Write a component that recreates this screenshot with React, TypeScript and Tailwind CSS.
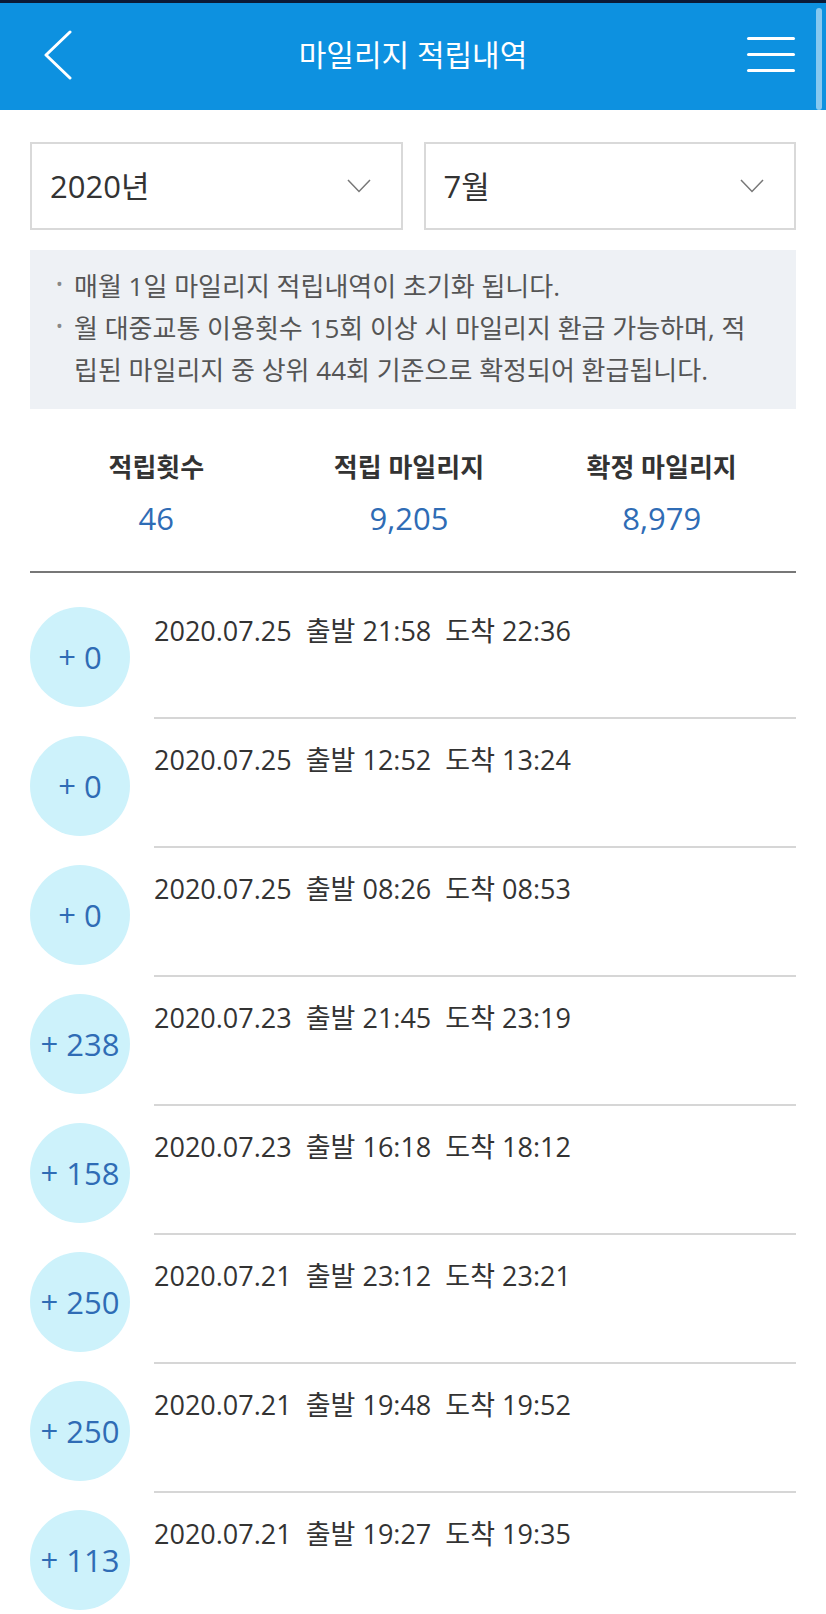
import React from "react";

type Trip = {
  points: number;
  date: string;
  depart: string;
  arrive: string;
};

const trips: Trip[] = [
  { points: 0, date: "2020.07.25", depart: "21:58", arrive: "22:36" },
  { points: 0, date: "2020.07.25", depart: "12:52", arrive: "13:24" },
  { points: 0, date: "2020.07.25", depart: "08:26", arrive: "08:53" },
  { points: 238, date: "2020.07.23", depart: "21:45", arrive: "23:19" },
  { points: 158, date: "2020.07.23", depart: "16:18", arrive: "18:12" },
  { points: 250, date: "2020.07.21", depart: "23:12", arrive: "23:21" },
  { points: 250, date: "2020.07.21", depart: "19:48", arrive: "19:52" },
  { points: 113, date: "2020.07.21", depart: "19:27", arrive: "19:35" },
];

const stats = [
  { label: "적립횟수", value: "46" },
  { label: "적립 마일리지", value: "9,205" },
  { label: "확정 마일리지", value: "8,979" },
];

function Chevron() {
  return (
    <svg width="24" height="14" viewBox="0 0 24 14" fill="none">
      <polyline points="1,1 12,12.5 23,1" stroke="#777" strokeWidth="1.5" />
    </svg>
  );
}

function Select({ label }: { label: string }) {
  return (
    <div className="flex h-[88px] items-center justify-between border-2 border-[#d9d9d9] bg-white pl-[18px] pr-[30px]">
      <span className="text-[31px] leading-none text-[#333]">{label}</span>
      <Chevron />
    </div>
  );
}

function TripRow({ trip }: { trip: Trip }) {
  return (
    <div className="flex pt-[17px]">
      <div className="flex h-[100px] w-[100px] shrink-0 items-center justify-center rounded-full bg-[#cdf2fb]">
        <span className="text-[31px] leading-none text-[#2f6cb5]">+ {trip.points}</span>
      </div>
      <div className="ml-[24px] h-[112px] flex-1 border-b-2 border-[#d6d6d6] pt-[6px]">
        <p className="whitespace-pre text-[27px] leading-[36px] text-[#333]">
          {trip.date}  출발 {trip.depart}  도착 {trip.arrive}
        </p>
      </div>
    </div>
  );
}

export default function App() {
  return (
    <div className="min-h-screen bg-white font-['Open_Sans','Noto_Sans_CJK_KR',sans-serif]">
      {/* Header */}
      <header className="relative grid h-[110px] grid-cols-[1fr_auto_1fr] items-center border-t-[3px] border-[#0b1a36] bg-[#0d91e0] pb-[4px]">
        <div className="flex justify-start pl-[44px]">
          <svg width="28" height="50" viewBox="0 0 28 50" fill="none">
            <polyline points="26,2 2,25 26,48" stroke="white" strokeWidth="3" strokeLinecap="round" strokeLinejoin="round" />
          </svg>
        </div>
        <h1 className="text-[30px] font-normal leading-none text-white">마일리지 적립내역</h1>
        <div className="flex justify-end pr-[31px]">
          <div className="flex flex-col gap-[13px]">
            <span className="block h-[3px] w-[48px] rounded-full bg-white" />
            <span className="block h-[3px] w-[48px] rounded-full bg-white" />
            <span className="block h-[3px] w-[48px] rounded-full bg-white" />
          </div>
        </div>
        <span className="absolute right-[4px] top-[5px] h-[102px] w-[6px] rounded-full bg-white/50" />
      </header>

      <main className="px-[30px]">
        {/* Year / month */}
        <div className="grid grid-cols-2 gap-[21px] pt-[32px]">
          <Select label="2020년" />
          <Select label="7월" />
        </div>

        {/* Notice */}
        <div className="mt-[20px] bg-[#eef1f5] pb-[18px] pl-[22px] pr-[8px] pt-[15px] text-[26px] leading-[42px] text-[#555]">
          <div className="flex">
            <span className="w-[22px] shrink-0 pl-[4px] text-[18px] leading-[38px] text-[#888]">•</span>
            <p className="whitespace-nowrap">매월 1일 마일리지 적립내역이 초기화 됩니다.</p>
          </div>
          <div className="flex">
            <span className="w-[22px] shrink-0 pl-[4px] text-[18px] leading-[38px] text-[#888]">•</span>
            <p className="whitespace-nowrap">
              월 대중교통 이용횟수 15회 이상 시 마일리지 환급 가능하며, 적
              <br />
              립된 마일리지 중 상위 44회 기준으로 확정되어 환급됩니다.
            </p>
          </div>
        </div>

        {/* Totals */}
        <div className="grid grid-cols-3 border-b-2 border-[#777] pb-[33px] pr-[8px] pt-[41px] text-center">
          {stats.map((s) => (
            <div key={s.label}>
              <div className="text-[26px] font-bold leading-[34px] text-[#333]">{s.label}</div>
              <div className="mt-[14px] text-[31px] leading-[40px] text-[#2f6cb5]">{s.value}</div>
            </div>
          ))}
        </div>

        {/* Trip list */}
        <div className="pt-[17px]">
          {trips.map((t, i) => (
            <TripRow key={i} trip={t} />
          ))}
        </div>
      </main>
    </div>
  );
}
